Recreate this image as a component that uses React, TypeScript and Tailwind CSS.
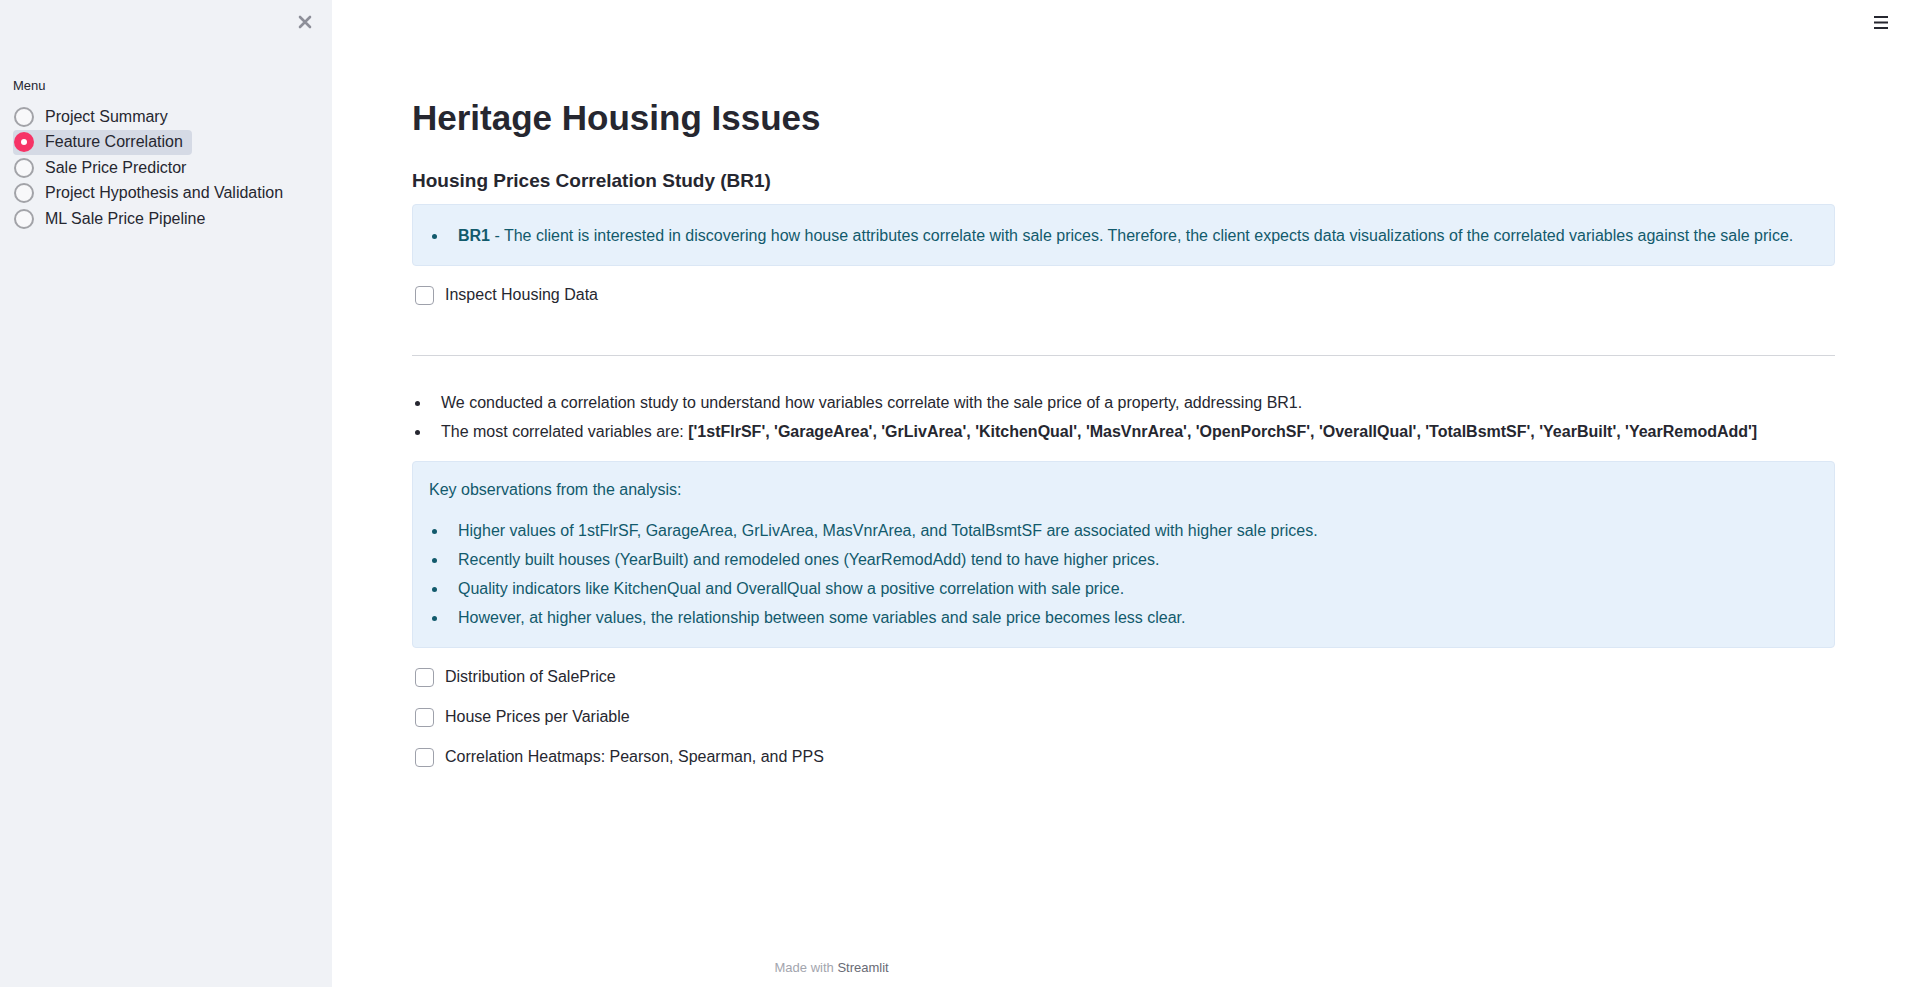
import React from 'react';

const menuItems = [
  'Project Summary',
  'Feature Correlation',
  'Sale Price Predictor',
  'Project Hypothesis and Validation',
  'ML Sale Price Pipeline',
];

const observations = [
  'Higher values of 1stFlrSF, GarageArea, GrLivArea, MasVnrArea, and TotalBsmtSF are associated with higher sale prices.',
  'Recently built houses (YearBuilt) and remodeled ones (YearRemodAdd) tend to have higher prices.',
  'Quality indicators like KitchenQual and OverallQual show a positive correlation with sale price.',
  'However, at higher values, the relationship between some variables and sale price becomes less clear.',
];

const Bullet: React.FC<{ dot: string; children: React.ReactNode }> = ({ dot, children }) => (
  <li className="flex items-center">
    <span className="w-[29px] shrink-0 flex">
      <span className={`ml-[3px] w-[5px] h-[5px] rounded-full ${dot}`}></span>
    </span>
    <span>{children}</span>
  </li>
);

const Checkbox: React.FC<{ label: string }> = ({ label }) => (
  <label className="flex items-center h-[24px] w-fit">
    <span className="ml-[3px] w-[19px] h-[19px] rounded-[4px] border-[1.5px] border-[#9ea1ab] bg-white"></span>
    <span className="ml-[11px] text-[16px] text-[#262730]">{label}</span>
  </label>
);

const Sidebar: React.FC = () => (
  <aside className="w-[332px] shrink-0 h-screen bg-[#f0f2f6] relative">
    {/* close button */}
    <button className="absolute left-[298px] top-[15px] w-[14px] h-[14px]">
      <svg viewBox="0 0 14 14" className="w-[14px] h-[14px]">
        <path d="M2 2 L12 12 M12 2 L2 12" stroke="#8d8f99" strokeWidth="2.6" strokeLinecap="round" />
      </svg>
    </button>

    <div className="pt-[77px] pl-[13px]">
      <div className="text-[13px] leading-[18px] text-[#262730]">Menu</div>
      <div className="mt-[9px] flex flex-col">
        {menuItems.map((item, i) => {
          const active = i === 1;
          return (
            <div
              key={item}
              className={`flex items-center h-[25.5px] w-fit pl-[1px] pr-[9px] rounded-[4px] ${active ? 'bg-[#d5dae5]' : ''}`}
            >
              {active ? (
                <span className="w-[20px] h-[20px] rounded-full bg-[#f63366] flex items-center justify-center">
                  <span className="w-[6px] h-[6px] rounded-full bg-white"></span>
                </span>
              ) : (
                <span className="w-[20px] h-[20px] rounded-full border-2 border-[#a2a3a8] bg-[#f8f8fa]"></span>
              )}
              <span className="ml-[11px] text-[16px] text-[#262730]">{item}</span>
            </div>
          );
        })}
      </div>
    </div>
  </aside>
);

export default function App() {
  return (
    <div className="flex w-full h-screen overflow-hidden bg-white font-['Liberation_Sans',sans-serif]">
      <Sidebar />

      <main className="flex-1 relative flex flex-col h-screen">
        {/* hamburger */}
        <button className="absolute right-[27px] top-[15px] w-[14px] h-[14px]">
          <svg viewBox="0 0 14 14" className="w-[14px] h-[14px]">
            <path d="M0 2 H14 M0 7.5 H14 M0 13 H14" stroke="#262730" strokeWidth="1.8" />
          </svg>
        </button>

        <div className="px-[80px] pt-[96px]">
          <h1 className="text-[35px] leading-[44px] font-bold text-[#262730]">Heritage Housing Issues</h1>
          <h3 className="mt-[27px] text-[19px] leading-[28px] font-semibold text-[#262730]">
            Housing Prices Correlation Study (BR1)
          </h3>

          <div className="mt-[9px] rounded-[4px] border border-[#dbe7f5] bg-[#e7f1fb] px-[16px] pt-[19px] pb-[17px] text-[16px] leading-[24px] text-[#125a6c]">
            <ul>
              <Bullet dot="bg-[#125a6c]">
                <b>BR1</b> - The client is interested in discovering how house attributes correlate with sale prices. Therefore, the client expects data visualizations of the correlated variables against the sale price.
              </Bullet>
            </ul>
          </div>

          <div className="mt-[17px]">
            <Checkbox label="Inspect Housing Data" />
          </div>

          <hr className="mt-[48px] border-0 h-[1px] bg-[#d4d6db]" />

          <ul className="mt-[35px] flex flex-col gap-[5px] text-[16px] leading-[24px] text-[#262730]">
            <Bullet dot="bg-[#262730]">
              We conducted a correlation study to understand how variables correlate with the sale price of a property, addressing BR1.
            </Bullet>
            <Bullet dot="bg-[#262730]">
              The most correlated variables are:{' '}
              <b>['1stFlrSF', 'GarageArea', 'GrLivArea', 'KitchenQual', 'MasVnrArea', 'OpenPorchSF', 'OverallQual', 'TotalBsmtSF', 'YearBuilt', 'YearRemodAdd']</b>
            </Bullet>
          </ul>

          <div className="mt-[17px] rounded-[4px] border border-[#dbe7f5] bg-[#e7f1fb] px-[16px] pt-[16px] pb-[17px] text-[16px] leading-[24px] text-[#125a6c]">
            <p>Key observations from the analysis:</p>
            <ul className="mt-[17px] flex flex-col gap-[5px]">
              {observations.map((o) => (
                <Bullet key={o} dot="bg-[#125a6c]">{o}</Bullet>
              ))}
            </ul>
          </div>

          <div className="mt-[17px] flex flex-col gap-[16px]">
            <Checkbox label="Distribution of SalePrice" />
            <Checkbox label="House Prices per Variable" />
            <Checkbox label="Correlation Heatmaps: Pearson, Spearman, and PPS" />
          </div>
        </div>

        <footer className="mt-auto w-[730px] mx-auto px-[16px] pb-[10px] text-[13px] leading-[18px] text-[#a3a5ae]">
          Made with <span className="text-[#696b75]">Streamlit</span>
        </footer>
      </main>
    </div>
  );
}
